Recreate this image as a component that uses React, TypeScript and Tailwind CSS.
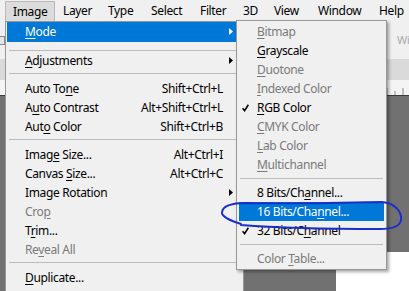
import React from 'react'

type Item =
    | { sep: true; off: number }
    | {
          sep?: false
          label: string
          u?: number
          shortcut?: string
          arrow?: boolean
          disabled?: boolean
          active?: boolean
          checked?: boolean
      }

const menuBar = [
    { label: 'Image', w: 'w-[50px]' },
    { label: 'Layer', w: 'w-[45px]' },
    { label: 'Type', w: 'w-[43px]' },
    { label: 'Select', w: 'w-[49px]' },
    { label: 'Filter', w: 'w-[43px]' },
    { label: '3D', w: 'w-[31px]' },
    { label: 'View', w: 'w-[44px]' },
    { label: 'Window', w: 'w-[61px]' },
    { label: 'Help', w: 'w-[38px]' }
]

const imageMenu: Item[] = [
    { label: 'Mode', u: 0, arrow: true, active: true },
    { sep: true, off: 8 },
    { label: 'Adjustments', u: 0, arrow: true },
    { sep: true, off: 3 },
    { label: 'Auto Tone', u: 7, shortcut: 'Shift+Ctrl+L' },
    { label: 'Auto Contrast', u: 1, shortcut: 'Alt+Shift+Ctrl+L' },
    { label: 'Auto Color', u: 3, shortcut: 'Shift+Ctrl+B' },
    { sep: true, off: 3 },
    { label: 'Image Size...', u: 4, shortcut: 'Alt+Ctrl+I' },
    { label: 'Canvas Size...', u: 7, shortcut: 'Alt+Ctrl+C' },
    { label: 'Image Rotation', arrow: true },
    { label: 'Crop', u: 3, disabled: true },
    { label: 'Trim...', u: 1 },
    { label: 'Reveal All', u: 2, disabled: true },
    { sep: true, off: 3 },
    { label: 'Duplicate...', u: 0 }
]

const modeMenu: Item[] = [
    { label: 'Bitmap', u: 0, disabled: true },
    { label: 'Grayscale', u: 0 },
    { label: 'Duotone', u: 0, disabled: true },
    { label: 'Indexed Color', u: 0, disabled: true },
    { label: 'RGB Color', u: 0, checked: true },
    { label: 'CMYK Color', u: 0, disabled: true },
    { label: 'Lab Color', u: 0, disabled: true },
    { label: 'Multichannel', u: 0, disabled: true },
    { sep: true, off: 4 },
    { label: '8 Bits/Channel...', u: 9 },
    { label: '16 Bits/Channel...', u: 11, active: true },
    { label: '32 Bits/Channel', u: 9, checked: true },
    { sep: true, off: 4 },
    { label: 'Color Table...', u: 6, disabled: true }
]

function Label({ text, u }: { text: string; u?: number }) {
    if (u === undefined) return <>{text}</>
    return (
        <>
            {text.slice(0, u)}
            <span className="underline underline-offset-[2px]">{text[u]}</span>
            {text.slice(u + 1)}
        </>
    )
}

function Check({ color }: { color: string }) {
    return (
        <svg width="7" height="8" viewBox="0 0 7 8" className="absolute left-[3px] top-[6px]">
            <path d="M0.5 4.2 L2.6 6.6 L6.4 0.8" fill="none" stroke={color} strokeWidth="1.6" />
        </svg>
    )
}

function Arrow({ color }: { color: string }) {
    return (
        <svg width="4" height="7" viewBox="0 0 4 7" className="absolute right-[9px] top-[6px]">
            <path d="M0 0 L4 3.5 L0 7 Z" fill={color} />
        </svg>
    )
}

function MenuList({ items, sepClass }: { items: Item[]; sepClass: string }) {
    return (
        <>
            {items.map((it, i) => {
                if (it.sep) {
                    return (
                        <div
                            key={i}
                            className={`h-[9px] ${it.off === 8 ? 'pt-[8px]' : it.off === 4 ? 'pt-[4px]' : 'pt-[3px]'}`}
                        >
                            <div className={`${sepClass} h-px bg-[#bcbcbc]`} />
                        </div>
                    )
                }
                const color = it.active ? 'text-white' : it.disabled ? 'text-[#7a7a7a]' : 'text-black'
                return (
                    <div
                        key={i}
                        className={`relative flex items-center pl-[18px] ${color} ${it.active ? 'bg-[#0078d7]' : ''} ${
                            it.label === 'Mode' ? 'h-[20px] leading-[20px]' : 'h-[19px] leading-[19px]'
                        }`}
                    >
                        {it.checked && <Check color={it.active ? '#fff' : '#000'} />}
                        <span className="whitespace-nowrap">
                            <Label text={it.label} u={it.u} />
                        </span>
                        {it.shortcut && <span className="ml-auto pr-[19px] whitespace-nowrap">{it.shortcut}</span>}
                        {it.arrow && <Arrow color={it.active ? '#fff' : '#000'} />}
                    </div>
                )
            })}
        </>
    )
}

export default function App() {
    return (
        <div
            className="relative h-[291px] w-[409px] overflow-hidden bg-[#f0f0f0] text-[12px] tracking-[-0.35px] text-black"
            style={{ fontFamily: '"Noto Sans", "Open Sans", sans-serif' }}
        >
            {/* Photoshop window behind the menus */}
            <div className="flex h-full flex-col">
                <div className="flex h-[21px] shrink-0">
                    {menuBar.map((m, i) => (
                        <div
                            key={m.label}
                            className={`${m.w} mt-[1px] h-[20px] shrink-0 leading-[20px] whitespace-nowrap ${
                                i === 0
                                    ? 'ml-[5px] border border-b-0 border-[#b9b9b9] bg-[#dcdcdc] pl-[7px]'
                                    : 'pl-[8px]'
                            }`}
                        >
                            {m.label}
                        </div>
                    ))}
                </div>

                {/* options bar */}
                <div className="relative h-[38px] shrink-0 bg-[#f0f0f0]">
                    <div className="mt-[15px] ml-[-4px] h-[9px] w-[9px] border border-[#8a8a8a] bg-[#e6e6e6]" />
                    <div className="absolute top-[11px] left-[397px] text-[11px] whitespace-nowrap text-[#a9a9a9]">Width:</div>
                </div>

                {/* tab bar */}
                <div className="h-[21px] shrink-0 bg-[#dadada]" />

                {/* ruler */}
                <div className="h-[16px] shrink-0 border-b border-[#3a3a3a] bg-[#f4f4f4]">
                    <svg width="409" height="15" className="block">
                        {[379, 387, 395, 403].map((x, i) => (
                            <line key={x} x1={x} x2={x} y1={i % 2 ? 8 : 11} y2="15" stroke="#8a8a8a" strokeWidth="1" />
                        ))}
                    </svg>
                </div>

                {/* workspace */}
                <div className="flex flex-1 flex-col bg-[#717171]">
                    <div className="h-[156px] shrink-0" />
                    <div className="flex flex-1">
                        <div className="w-[336px] shrink-0" />
                        <div className="flex-1 bg-white" />
                    </div>
                </div>
            </div>

            {/* Image menu */}
            <div className="absolute top-[21px] left-[5px] h-[280px] w-[239px] border border-[#979797] bg-[#f0f0f0] px-px">
                <MenuList items={imageMenu} sepClass="ml-[2px]" />
            </div>

            {/* Mode submenu */}
            <div className="absolute top-[20px] left-[236px] w-[151px] border border-[#979797] bg-[#f0f0f0] px-[2px] py-px shadow-[2px_2px_3px_rgba(0,0,0,0.35)]">
                <MenuList items={modeMenu} sepClass="mx-px" />
            </div>

            {/* hand drawn marker ring */}
            <svg width="409" height="291" className="pointer-events-none absolute top-0 left-0">
                <path
                    d="M241 224 C232 221 221 217 222 212 C223 206 232 203 246 203 C290 204 340 203 382 202 C395 203 402 212 401 220 C400 227 392 229 380 229 C330 229 280 228 241 225"
                    fill="none"
                    stroke="#1b2ec8"
                    strokeWidth="2"
                    strokeLinecap="round"
                />
            </svg>
        </div>
    )
}
